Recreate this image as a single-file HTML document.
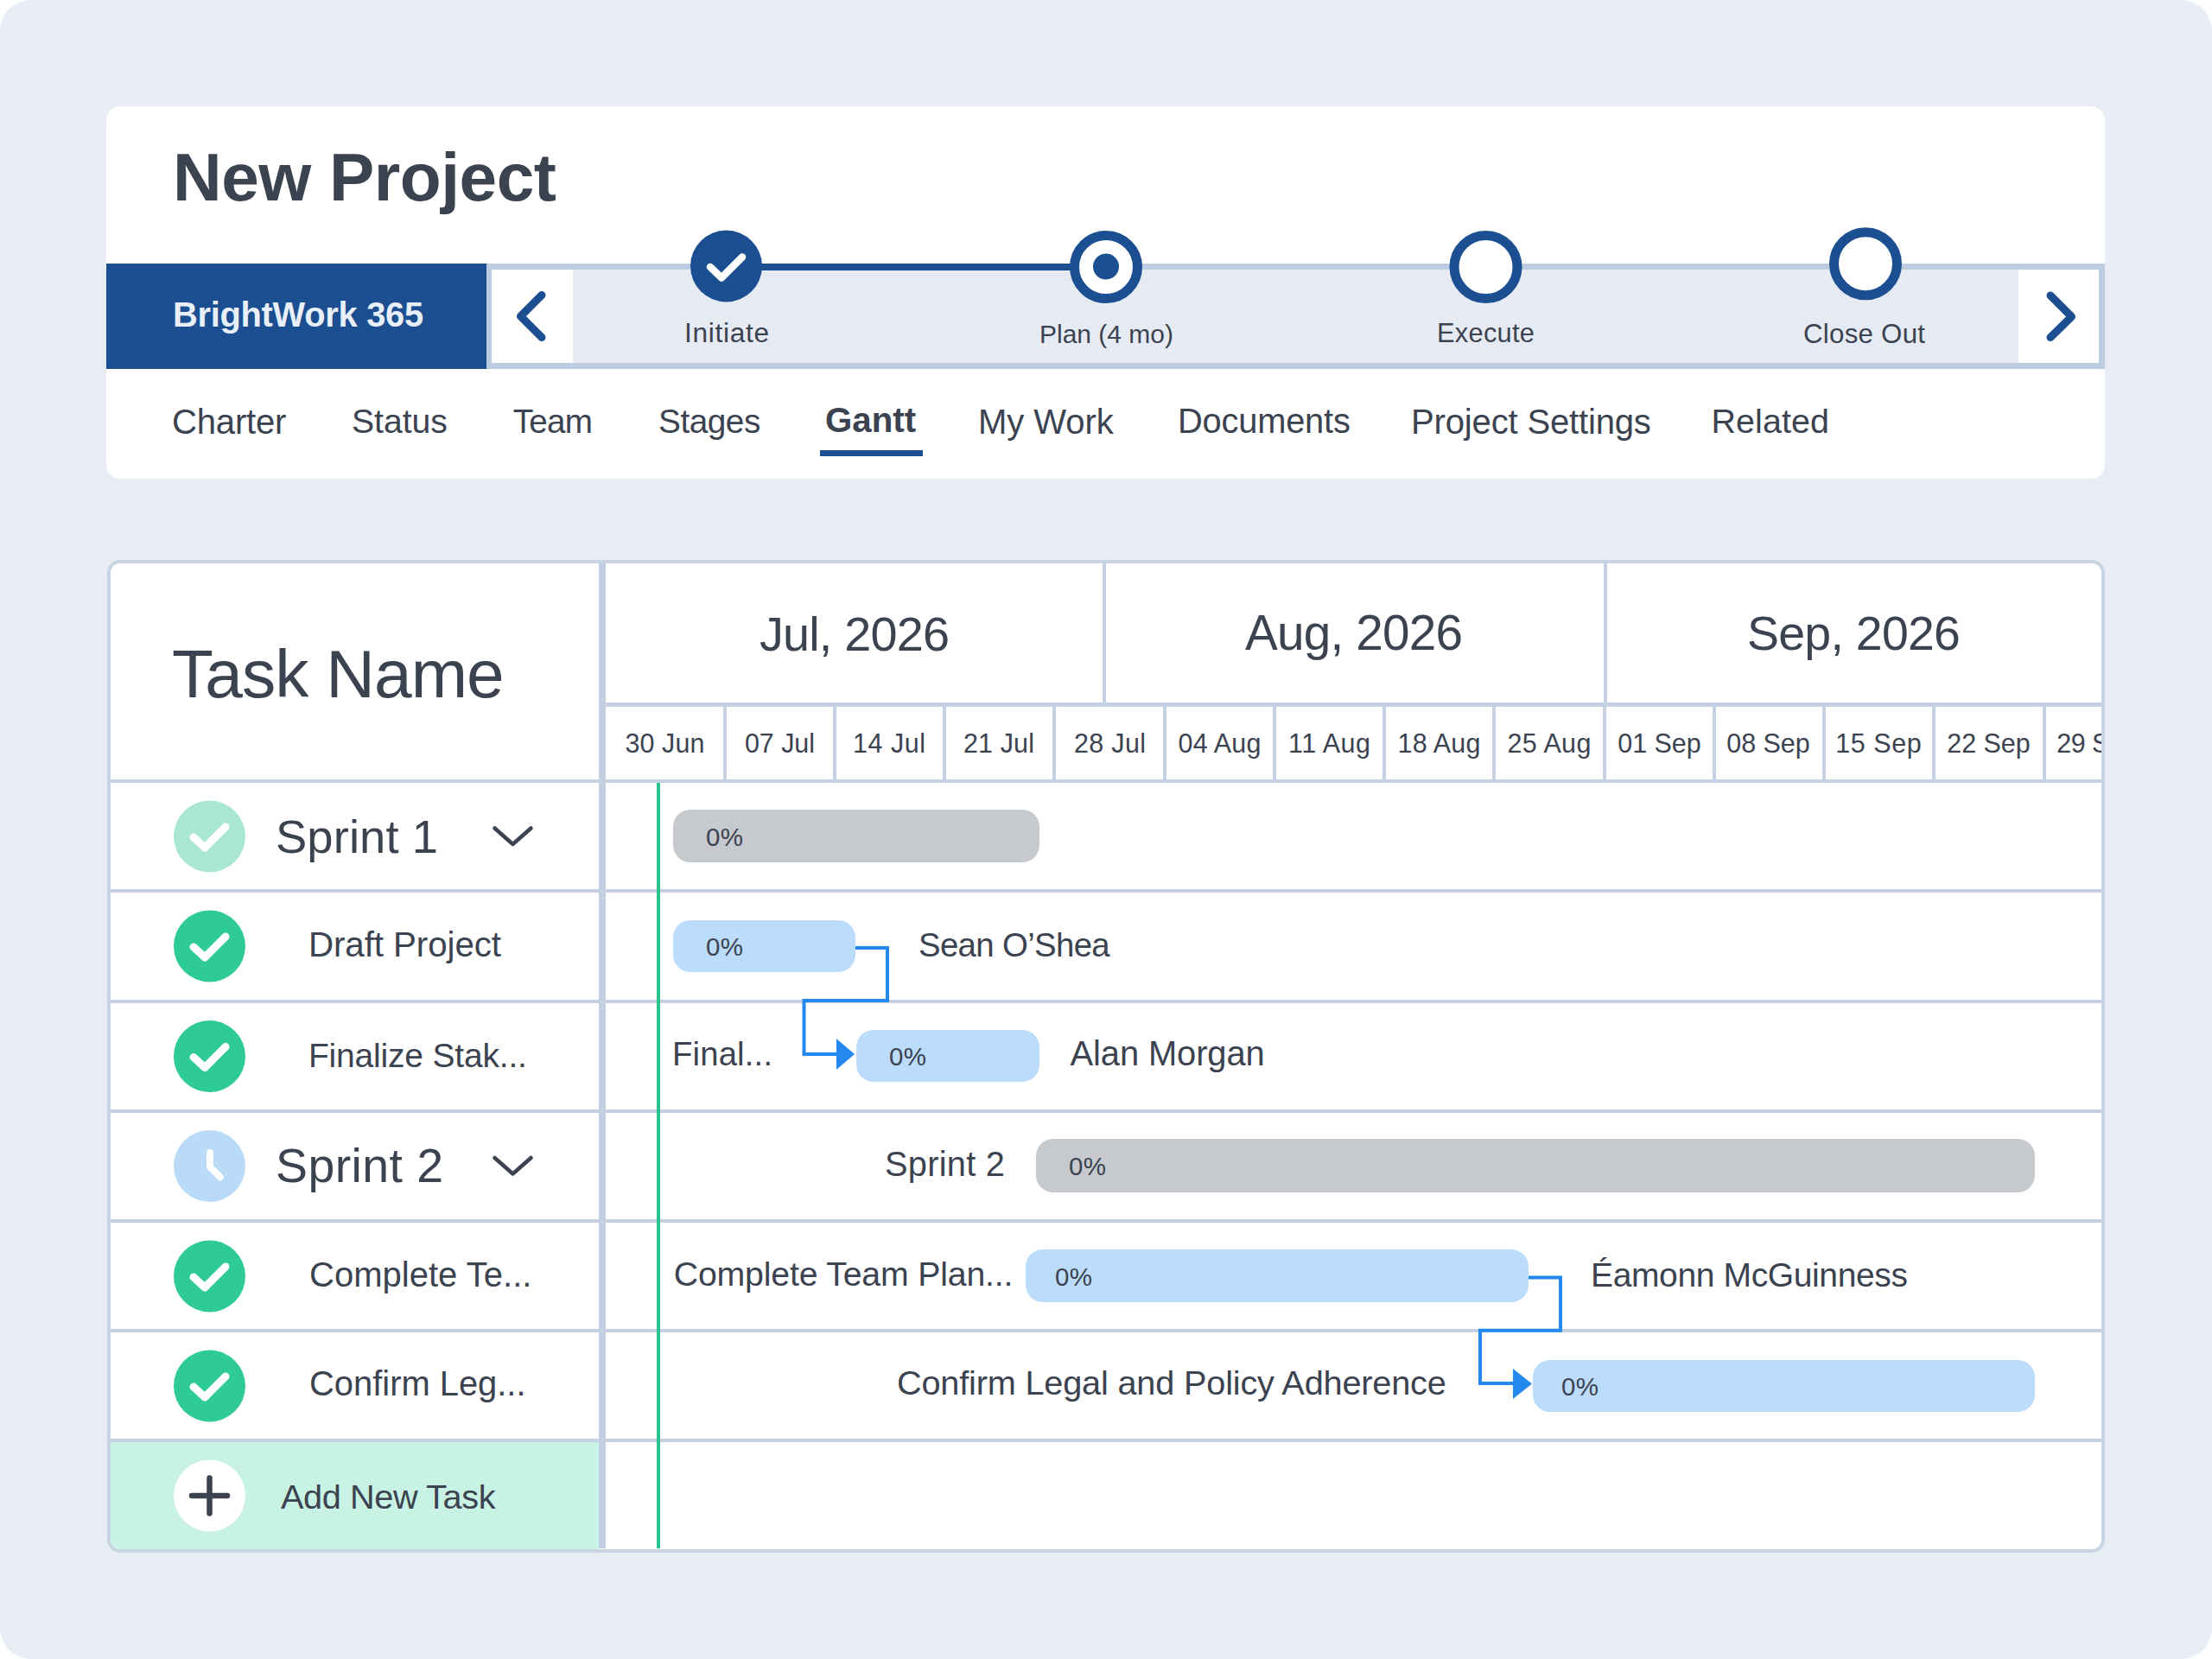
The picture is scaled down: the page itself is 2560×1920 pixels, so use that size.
<!DOCTYPE html>
<html><head><meta charset="utf-8"><style>
html,body{margin:0;padding:0;width:2560px;height:1920px;overflow:hidden;background:#ffffff}
body{position:relative;font-family:"Liberation Sans",sans-serif}
.b{position:absolute}
.t{position:absolute;line-height:1;white-space:nowrap}
svg{position:absolute;left:0;top:0}
</style></head><body>
<div class="b" style="left:0px;top:0px;width:2560px;height:1920px;background:#e8ecf4;border-radius:36px;"></div>
<div class="b" style="left:123px;top:123px;width:2313px;height:431px;background:#ffffff;border-radius:16px;"></div>
<div class="t" style="left:200.00px;top:165.60px;font-size:78.43px;letter-spacing:-0.499px;color:#3b4250;font-weight:700;">New Project</div>
<div class="b" style="left:123px;top:305px;width:440px;height:122px;background:#1b4f91;"></div>
<div class="t" style="left:200.00px;top:344.77px;font-size:39.83px;letter-spacing:-0.275px;color:#e9eff8;font-weight:700;">BrightWork 365</div>
<div class="b" style="left:563px;top:305px;width:1873px;height:122px;background:#bccde2;"></div>
<div class="b" style="left:569px;top:312px;width:1860px;height:108px;background:#e6ebf3;"></div>
<div class="b" style="left:569px;top:312px;width:94px;height:108px;background:#ffffff;"></div>
<div class="b" style="left:2336px;top:312px;width:93px;height:108px;background:#ffffff;"></div>
<div class="b" style="left:840px;top:304.5px;width:440px;height:8.0px;background:#1b4f91;"></div>
<div class="t" style="left:792.00px;top:370.20px;font-size:31.65px;letter-spacing:0.685px;color:#3b4250;">Initiate</div>
<div class="t" style="left:1203.00px;top:371.59px;font-size:30.01px;letter-spacing:-0.014px;color:#3b4250;">Plan (4 mo)</div>
<div class="t" style="left:1663.00px;top:370.96px;font-size:30.75px;letter-spacing:0.304px;color:#3b4250;">Execute</div>
<div class="t" style="left:2087.00px;top:370.53px;font-size:31.26px;letter-spacing:0.255px;color:#3b4250;">Close Out</div>
<div class="t" style="left:199.00px;top:467.59px;font-size:40.05px;letter-spacing:-0.195px;color:#3b4250;">Charter</div>
<div class="t" style="left:407.00px;top:468.33px;font-size:39.17px;letter-spacing:-0.012px;color:#3b4250;">Status</div>
<div class="t" style="left:593.80px;top:468.76px;font-size:38.67px;letter-spacing:-0.781px;color:#3b4250;">Team</div>
<div class="t" style="left:762.00px;top:468.67px;font-size:38.78px;letter-spacing:-0.480px;color:#3b4250;">Stages</div>
<div class="t" style="left:955.00px;top:467.43px;font-size:40.24px;letter-spacing:-0.005px;color:#3b4250;font-weight:700;">Gantt</div>
<div class="t" style="left:1132.00px;top:467.58px;font-size:40.07px;letter-spacing:-0.077px;color:#3b4250;">My Work</div>
<div class="t" style="left:1363.00px;top:467.76px;font-size:39.85px;letter-spacing:-0.205px;color:#3b4250;">Documents</div>
<div class="t" style="left:1633.00px;top:467.58px;font-size:40.07px;letter-spacing:-0.178px;color:#3b4250;">Project Settings</div>
<div class="t" style="left:1980.40px;top:468.12px;font-size:39.42px;letter-spacing:0.131px;color:#3b4250;">Related</div>
<div class="b" style="left:948.5px;top:520.5px;width:119.5px;height:7.0px;background:#1b4f91;"></div>
<div class="b" style="left:123.5px;top:647.5px;width:2312.5px;height:1149.5px;background:#c9d4e3;border-radius:15px;"></div>
<div class="b" style="left:127.5px;top:651.5px;width:2304.5px;height:1141.5px;background:#ffffff;border-radius:11px;"></div>
<div class="b" style="left:127.5px;top:1669px;width:565.5px;height:124px;background:#c8f2e4;border-bottom-left-radius:11px;"></div>
<div class="b" style="left:693px;top:652px;width:8px;height:1140px;background:#c3cfe0;"></div>
<div class="b" style="left:1276px;top:652px;width:4px;height:161px;background:#c5d1e2;"></div>
<div class="b" style="left:1855.5px;top:652px;width:4.0px;height:161px;background:#c5d1e2;"></div>
<div class="b" style="left:701px;top:813px;width:1731px;height:5px;background:#c5d1e2;"></div>
<div class="b" style="left:836.5px;top:818px;width:4.0px;height:84px;background:#c5d1e2;"></div>
<div class="b" style="left:963.75px;top:818px;width:4.0px;height:84px;background:#c5d1e2;"></div>
<div class="b" style="left:1091.0px;top:818px;width:4.0px;height:84px;background:#c5d1e2;"></div>
<div class="b" style="left:1218.25px;top:818px;width:4.0px;height:84px;background:#c5d1e2;"></div>
<div class="b" style="left:1345.5px;top:818px;width:4.0px;height:84px;background:#c5d1e2;"></div>
<div class="b" style="left:1472.75px;top:818px;width:4.0px;height:84px;background:#c5d1e2;"></div>
<div class="b" style="left:1600.0px;top:818px;width:4.0px;height:84px;background:#c5d1e2;"></div>
<div class="b" style="left:1727.25px;top:818px;width:4.0px;height:84px;background:#c5d1e2;"></div>
<div class="b" style="left:1854.5px;top:818px;width:4.0px;height:84px;background:#c5d1e2;"></div>
<div class="b" style="left:1981.75px;top:818px;width:4.0px;height:84px;background:#c5d1e2;"></div>
<div class="b" style="left:2109.0px;top:818px;width:4.0px;height:84px;background:#c5d1e2;"></div>
<div class="b" style="left:2236.25px;top:818px;width:4.0px;height:84px;background:#c5d1e2;"></div>
<div class="b" style="left:2363.5px;top:818px;width:4.0px;height:84px;background:#c5d1e2;"></div>
<div class="b" style="left:127.5px;top:902px;width:2304.5px;height:4px;background:#c5d1e2;"></div>
<div class="b" style="left:127.5px;top:1029.4px;width:2304.5px;height:4.0px;background:#c5d1e2;"></div>
<div class="b" style="left:127.5px;top:1156.7px;width:2304.5px;height:4.0px;background:#c5d1e2;"></div>
<div class="b" style="left:127.5px;top:1283.8px;width:2304.5px;height:4.0px;background:#c5d1e2;"></div>
<div class="b" style="left:127.5px;top:1411px;width:2304.5px;height:4px;background:#c5d1e2;"></div>
<div class="b" style="left:127.5px;top:1538.3px;width:2304.5px;height:4.0px;background:#c5d1e2;"></div>
<div class="b" style="left:127.5px;top:1665px;width:2304.5px;height:4px;background:#c5d1e2;"></div>
<div class="t" style="left:199.00px;top:740.56px;font-size:78.47px;letter-spacing:-0.969px;color:#3b4250;">Task Name</div>
<div class="t" style="left:879.00px;top:705.53px;font-size:55.83px;letter-spacing:-0.832px;color:#3b4250;">Jul, 2026</div>
<div class="t" style="left:1441.00px;top:704.81px;font-size:56.68px;letter-spacing:-0.810px;color:#3b4250;">Aug, 2026</div>
<div class="t" style="left:2022.00px;top:705.85px;font-size:55.45px;letter-spacing:-0.732px;color:#3b4250;">Sep, 2026</div>
<div class="b" style="left:0;top:0;width:2432px;height:1920px;overflow:hidden"><div class="t" style="left:723.56px;top:845.40px;font-size:30.47px;letter-spacing:0.061px;color:#3b4250;">30 Jun</div><div class="t" style="left:861.95px;top:845.40px;font-size:30.47px;letter-spacing:-0.054px;color:#3b4250;">07 Jul</div><div class="t" style="left:986.95px;top:845.40px;font-size:30.47px;letter-spacing:0.546px;color:#3b4250;">14 Jul</div><div class="t" style="left:1114.95px;top:845.40px;font-size:30.47px;letter-spacing:0.146px;color:#3b4250;">21 Jul</div><div class="t" style="left:1242.95px;top:845.40px;font-size:30.47px;letter-spacing:0.346px;color:#3b4250;">28 Jul</div><div class="t" style="left:1363.53px;top:845.40px;font-size:30.47px;letter-spacing:0.203px;color:#3b4250;">04 Aug</div><div class="t" style="left:1490.98px;top:845.40px;font-size:30.47px;letter-spacing:0.479px;color:#3b4250;">11 Aug</div><div class="t" style="left:1617.53px;top:845.40px;font-size:30.47px;letter-spacing:0.203px;color:#3b4250;">18 Aug</div><div class="t" style="left:1744.53px;top:845.40px;font-size:30.47px;letter-spacing:0.403px;color:#3b4250;">25 Aug</div><div class="t" style="left:1872.26px;top:845.40px;font-size:30.47px;letter-spacing:-0.025px;color:#3b4250;">01 Sep</div><div class="t" style="left:1998.26px;top:845.40px;font-size:30.47px;letter-spacing:-0.025px;color:#3b4250;">08 Sep</div><div class="t" style="left:2124.26px;top:845.40px;font-size:30.47px;letter-spacing:0.575px;color:#3b4250;">15 Sep</div><div class="t" style="left:2253.26px;top:845.40px;font-size:30.47px;letter-spacing:-0.025px;color:#3b4250;">22 Sep</div><div class="t" style="left:2380.26px;top:845.40px;font-size:30.47px;letter-spacing:-0.496px;color:#3b4250;">29 Sep</div></div>
<div class="b" style="left:759.5px;top:906px;width:4.0px;height:886px;background:#2cc28c;"></div>
<div class="t" style="left:319.00px;top:941.99px;font-size:54.34px;letter-spacing:0.114px;color:#3b4250;">Sprint 1</div>
<div class="t" style="left:357.00px;top:1073.36px;font-size:40.32px;letter-spacing:-0.083px;color:#3b4250;">Draft Project</div>
<div class="t" style="left:357.00px;top:1202.00px;font-size:38.98px;letter-spacing:-0.179px;color:#3b4250;">Finalize Stak...</div>
<div class="t" style="left:319.00px;top:1322.09px;font-size:55.41px;letter-spacing:0.446px;color:#3b4250;">Sprint 2</div>
<div class="t" style="left:358.00px;top:1455.42px;font-size:40.01px;letter-spacing:0.024px;color:#3b4250;">Complete Te...</div>
<div class="t" style="left:358.00px;top:1581.72px;font-size:39.90px;letter-spacing:0.001px;color:#3b4250;">Confirm Leg...</div>
<div class="t" style="left:325.00px;top:1712.88px;font-size:39.71px;letter-spacing:-0.412px;color:#3b4250;">Add New Task</div>
<div class="b" style="left:778.6px;top:937px;width:423.9999999999999px;height:61px;background:#c6c9cd;border-radius:20px;"></div>
<div class="t" style="left:817.00px;top:953.83px;font-size:29.49px;letter-spacing:0.385px;color:#3b4250;">0%</div>
<div class="b" style="left:778.6px;top:1064.6px;width:211.39999999999998px;height:60.700000000000045px;background:#bbdcfa;border-radius:20px;"></div>
<div class="t" style="left:817.00px;top:1081.28px;font-size:29.49px;letter-spacing:0.385px;color:#3b4250;">0%</div>
<div class="b" style="left:990.6px;top:1192px;width:211.9999999999999px;height:60px;background:#bbdcfa;border-radius:20px;"></div>
<div class="t" style="left:1029.00px;top:1208.33px;font-size:29.49px;letter-spacing:0.385px;color:#3b4250;">0%</div>
<div class="b" style="left:1199px;top:1318px;width:1156px;height:62px;background:#c6c9cd;border-radius:20px;"></div>
<div class="t" style="left:1237.00px;top:1335.33px;font-size:29.49px;letter-spacing:0.385px;color:#3b4250;">0%</div>
<div class="b" style="left:1187px;top:1446px;width:582px;height:61px;background:#bbdcfa;border-radius:20px;"></div>
<div class="t" style="left:1221.00px;top:1462.83px;font-size:29.49px;letter-spacing:0.385px;color:#3b4250;">0%</div>
<div class="b" style="left:1774px;top:1573.6px;width:581px;height:60.40000000000009px;background:#bbdcfa;border-radius:20px;"></div>
<div class="t" style="left:1807.00px;top:1590.13px;font-size:29.49px;letter-spacing:0.385px;color:#3b4250;">0%</div>
<div class="t" style="left:1063.00px;top:1074.79px;font-size:38.40px;letter-spacing:-0.668px;color:#3b4250;">Sean O’Shea</div>
<div class="t" style="left:778.00px;top:1201.43px;font-size:38.23px;letter-spacing:0.188px;color:#3b4250;">Final...</div>
<div class="t" style="left:1238.60px;top:1200.21px;font-size:39.90px;letter-spacing:-0.105px;color:#3b4250;">Alan Morgan</div>
<div class="t" style="left:1024.00px;top:1327.91px;font-size:39.78px;letter-spacing:0.277px;color:#3b4250;">Sprint 2</div>
<div class="t" style="left:779.80px;top:1454.73px;font-size:39.29px;letter-spacing:-0.204px;color:#3b4250;">Complete Team Plan...</div>
<div class="t" style="left:1841.00px;top:1455.95px;font-size:39.04px;letter-spacing:-0.388px;color:#3b4250;">Éamonn McGuinness</div>
<div class="t" style="left:1038.00px;top:1581.17px;font-size:39.71px;letter-spacing:-0.194px;color:#3b4250;">Confirm Legal and Policy Adherence</div>
<svg width="2560" height="1920" viewBox="0 0 2560 1920"><polyline points="627,341.5 602.5,366 627,390.5" fill="none" stroke="#1b4f91" stroke-width="9" stroke-linecap="round" stroke-linejoin="round"/>
<polyline points="2373,342 2397.5,366.5 2373,390.5" fill="none" stroke="#1b4f91" stroke-width="9" stroke-linecap="round" stroke-linejoin="round"/>
<circle cx="840.5" cy="308" r="41.5" fill="#1b4f91"/>
<polyline points="822,309 835,321.5 859,297.5" fill="none" stroke="#fff" stroke-width="8.5" stroke-linecap="round" stroke-linejoin="round"/>
<circle cx="1280" cy="309" r="36.5" fill="#fff" stroke="#1b4f91" stroke-width="11"/>
<circle cx="1280" cy="308.5" r="15" fill="#1b4f91"/>
<circle cx="1719.5" cy="309" r="36.5" fill="#fff" stroke="#1b4f91" stroke-width="11"/>
<circle cx="2159" cy="305.2" r="36.5" fill="#fff" stroke="#1b4f91" stroke-width="11"/>
<circle cx="242.5" cy="968" r="41.5" fill="#a9e7d2"/>
<circle cx="242.5" cy="1095" r="41.5" fill="#2ecc94"/>
<circle cx="242.5" cy="1222.5" r="41.5" fill="#2ecc94"/>
<circle cx="242.5" cy="1477" r="41.5" fill="#2ecc94"/>
<circle cx="242.5" cy="1604" r="41.5" fill="#2ecc94"/>
<circle cx="242.5" cy="1349.5" r="41.5" fill="#b9dbf8"/>
<circle cx="242.5" cy="1731" r="41.5" fill="#ffffff"/>
<polyline points="224,969 237,981 261,957" fill="none" stroke="#fff" stroke-width="9" stroke-linecap="round" stroke-linejoin="round"/>
<polyline points="224,1096 237,1108 261,1084" fill="none" stroke="#fff" stroke-width="9" stroke-linecap="round" stroke-linejoin="round"/>
<polyline points="224,1223.5 237,1235.5 261,1211.5" fill="none" stroke="#fff" stroke-width="9" stroke-linecap="round" stroke-linejoin="round"/>
<polyline points="224,1478 237,1490 261,1466" fill="none" stroke="#fff" stroke-width="9" stroke-linecap="round" stroke-linejoin="round"/>
<polyline points="224,1605 237,1617 261,1593" fill="none" stroke="#fff" stroke-width="9" stroke-linecap="round" stroke-linejoin="round"/>
<polyline points="243,1334.0 243,1350.5 254.8,1362.3" fill="none" stroke="#fff" stroke-width="8" stroke-linecap="round" stroke-linejoin="round"/>
<path d="M222 1731 H263 M242.5 1710.5 V1751.5" stroke="#3b4250" stroke-width="6.5" stroke-linecap="round"/>
<polyline points="572.5,958.5 593.5,977 614.5,958.5" fill="none" stroke="#3b4250" stroke-width="4.5" stroke-linecap="round" stroke-linejoin="round"/>
<polyline points="572.5,1340.0 593.5,1358.5 614.5,1340.0" fill="none" stroke="#3b4250" stroke-width="4.5" stroke-linecap="round" stroke-linejoin="round"/>
<polyline points="990,1097 1027,1097 1027,1158 930.5,1158 930.5,1220 970,1220" fill="none" stroke="#2489ee" stroke-width="4"/>
<polygon points="968,1202 989,1220 968,1238" fill="#2489ee"/>
<polyline points="1769,1478.5 1806,1478.5 1806,1539.7 1713,1539.7 1713,1601 1753,1601" fill="none" stroke="#2489ee" stroke-width="4"/>
<polygon points="1751,1584 1773,1601.5 1751,1619" fill="#2489ee"/></svg>
</body></html>
